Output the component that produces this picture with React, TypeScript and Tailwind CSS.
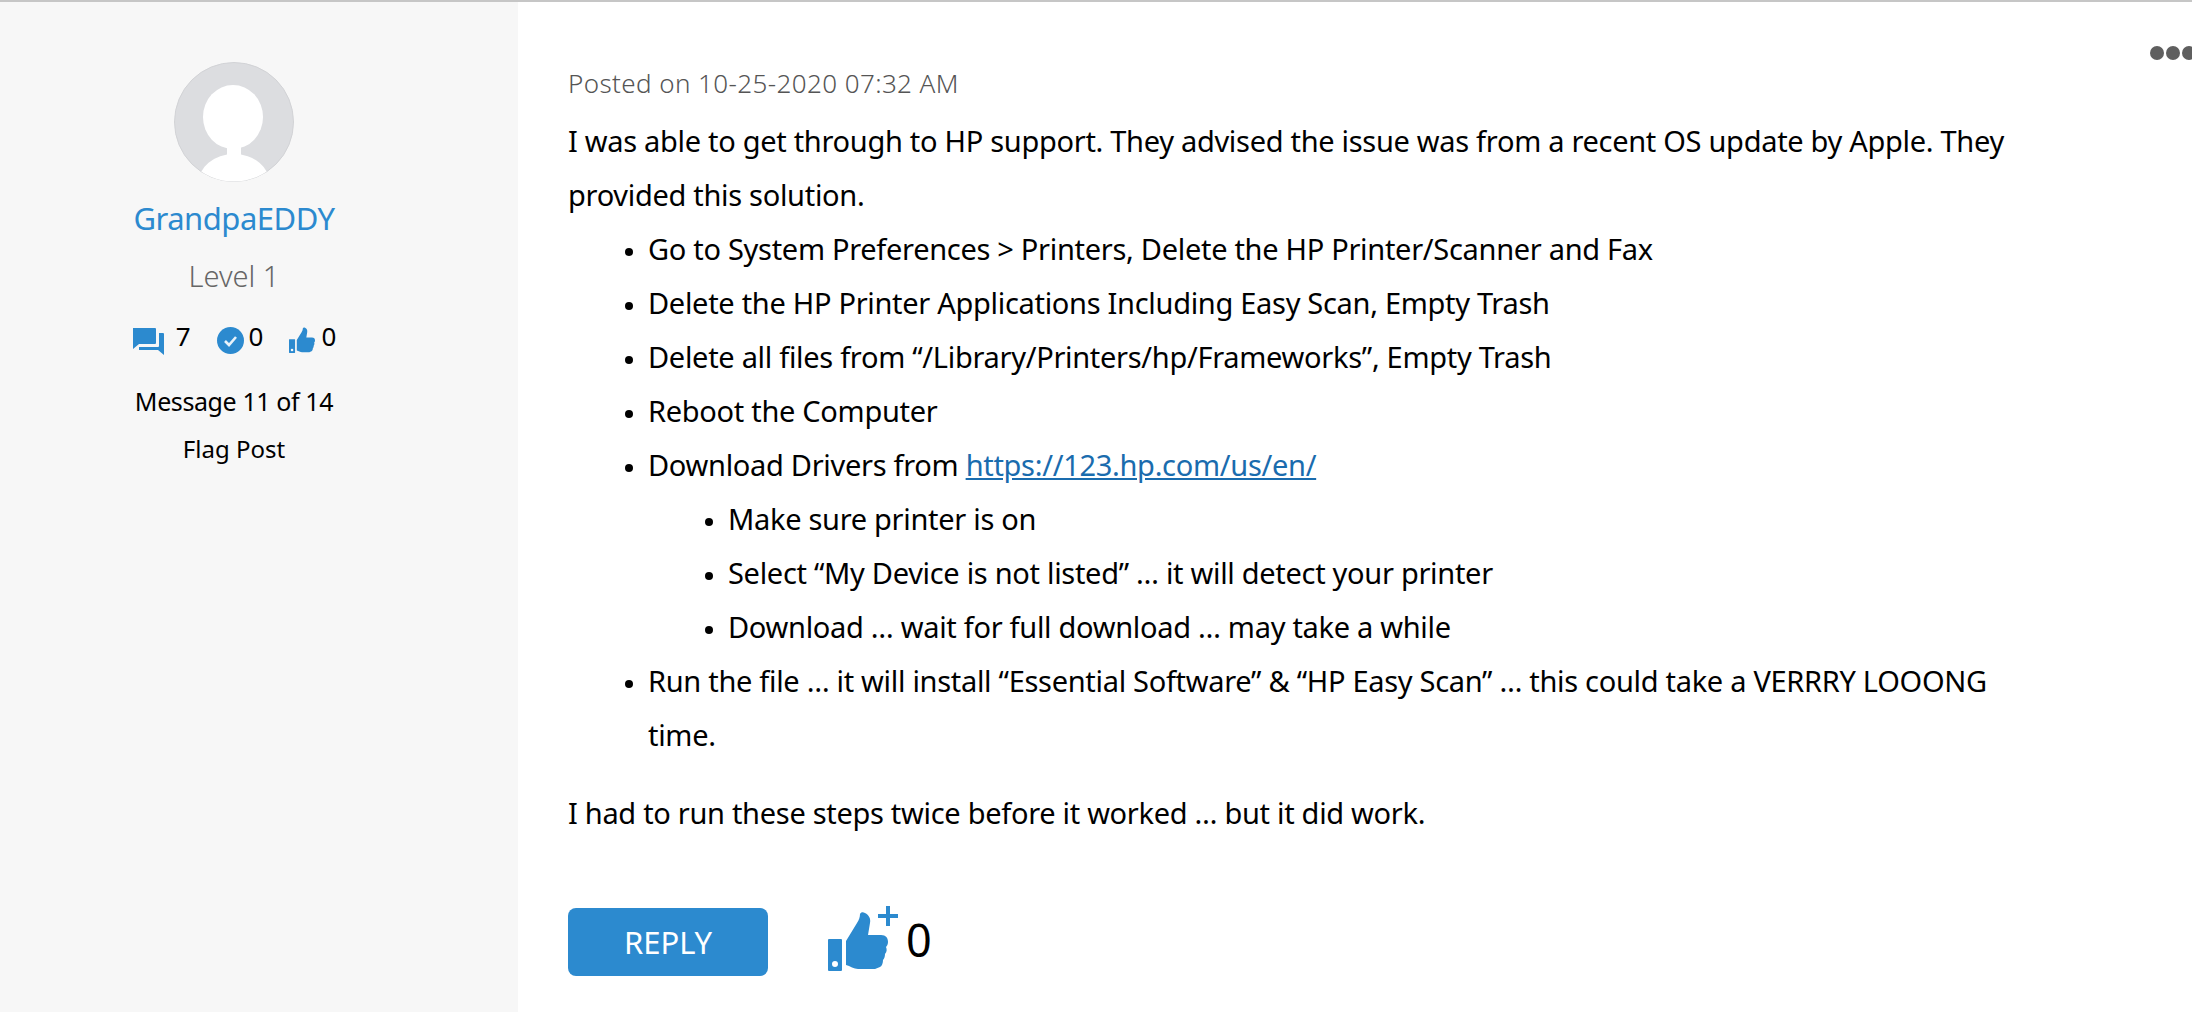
const blue = "#2c8acf";

function ThumbIcon({ className, plus }: { className: string; plus?: boolean }) {
  return (
    <svg viewBox={plus ? "0 0 72 68" : "0 6 60 60"} className={className} fill={blue}>
      <path
        fillRule="evenodd"
        d="M1 34h12a1 1 0 0 1 1 1v30a1 1 0 0 1-1 1H1a1 1 0 0 1-1-1V35a1 1 0 0 1 1-1zm6 22a3 3 0 1 0 0 6 3 3 0 0 0 0-6z"
      />
      <path d="M18 36 29 18c2-3 3-6 3-9 1-2 3-2 5-1 4 2 6 6 5 10l-2 12h13c5 0 7 3 7 7 0 2-1 4-2 5 1 2 1 5-1 7 0 3-1 5-2 6 0 3-1 6-3 7l-5 2H30c-4 0-8-3-12-4z" />
      {plus && <path d="M58 1h4v8h8v4h-8v8h-4v-8h-8V9h8z" />}
    </svg>
  );
}

function Stat({ icon, value, gap }: { icon: React.ReactNode; value: string; gap: string }) {
  return (
    <div className={`flex items-start ${gap}`}>
      {icon}
      <span className="text-[26px] leading-[27px] text-black">{value}</span>
    </div>
  );
}

export default function App() {
  return (
    <div className="relative flex h-[1012px] overflow-hidden border-t-2 border-[#c6c6c6] bg-white font-['Noto_Sans',sans-serif]">
      {/* author column */}
      <aside className="flex w-[518px] flex-col items-center bg-[#f7f7f7] pr-[50px] pt-[60px]">
        <svg viewBox="0 0 120 120" className="h-[120px] w-[120px]">
          <defs>
            <clipPath id="avatar">
              <circle cx="60" cy="60" r="59.5" />
            </clipPath>
          </defs>
          <circle cx="60" cy="60" r="59.5" fill="#dcdde0" stroke="#d2d3d6" />
          <g clipPath="url(#avatar)" fill="#fff">
            <ellipse cx="59" cy="55" rx="30" ry="32" />
            <rect x="53" y="78" width="14" height="22" />
            <ellipse cx="60" cy="122" rx="36" ry="30" />
          </g>
        </svg>
        <a className="mt-[13px] text-[31px] leading-[46px] tracking-[-0.5px] text-[#2c8acf]">GrandpaEDDY</a>
        <div className="mt-[14px] text-[29px] font-light leading-[42px] text-[#666666]">Level 1</div>
        <div className="mt-[26px] flex items-start gap-[26px]">
          <Stat
            gap="gap-[12px]"
            value="7"
            icon={
              <svg viewBox="0 0 32 28" className="mt-[4px] h-[28px] w-[32px]" fill={blue}>
                <path d="M1 1h22a1 1 0 0 1 1 1v14a1 1 0 0 1-1 1H7l-6 5z" />
                <path d="M27 6h4a1 1 0 0 1 1 1v21l-6-5H7v-3h19a1 1 0 0 0 1-1z" />
              </svg>
            }
          />
          <Stat
            gap="gap-[5px]"
            value="0"
            icon={
              <svg viewBox="0 0 27 27" className="mt-[4px] h-[27px] w-[27px]">
                <circle cx="13.5" cy="13.5" r="13.5" fill={blue} />
                <path d="M8 14l4 4 7-8" fill="none" stroke="#e8f2fa" strokeWidth="2.6" />
              </svg>
            }
          />
          <Stat gap="gap-[6px]" value="0" icon={<ThumbIcon className="mt-[4px] h-[26px] w-[26px]" />} />
        </div>
        <div className="mt-[28px] text-[25px] leading-[36px] tracking-[-0.4px] text-black">Message 11 of 14</div>
        <a className="mt-[12px] text-[24px] leading-[36px] text-black">Flag Post</a>
      </aside>

      {/* post body */}
      <main className="flex-1 pl-[50px] pr-[160px] pt-[63px] text-[29px] leading-[54px] tracking-[-0.3px] text-black">
        <div className="mb-[13px] text-[26px] font-light leading-[36px] tracking-[0.4px] text-[#555555]">Posted on 10-25-2020 07:32 AM</div>
        <p>
          I was able to get through to HP support. They advised the issue was from a recent OS update by Apple. They
          provided this solution.
        </p>
        <ul className="list-disc pl-[80px] marker:text-[23px]">
          <li>Go to System Preferences &gt; Printers, Delete the HP Printer/Scanner and Fax</li>
          <li>Delete the HP Printer Applications Including Easy Scan, Empty Trash</li>
          <li>Delete all files from “/Library/Printers/hp/Frameworks”, Empty Trash</li>
          <li>Reboot the Computer</li>
          <li>
            Download Drivers from <a className="text-[#1a6cae] underline">https://123.hp.com/us/en/</a>
            <ul className="list-disc pl-[80px] marker:text-[23px]">
              <li>Make sure printer is on</li>
              <li>Select “My Device is not listed” … it will detect your printer</li>
              <li>Download … wait for full download … may take a while</li>
            </ul>
          </li>
          <li>Run the file … it will install “Essential Software” &amp; “HP Easy Scan” … this could take a VERRRY LOOONG time.</li>
        </ul>
        <p className="mt-[24px]">I had to run these steps twice before it worked … but it did work.</p>
        <div className="mt-[68px] flex items-start">
          <button className="h-[68px] w-[200px] rounded-[8px] bg-[#2c8acf] text-[31px] tracking-normal text-white">REPLY</button>
          <ThumbIcon plus className="ml-[60px] -mt-[3px] h-[68px] w-[72px]" />
          <span className="ml-[6px] mt-[2px] text-[45px] leading-[60px] tracking-normal text-black">0</span>
        </div>
      </main>

      {/* overflow menu, cut off by the window edge */}
      <div className="absolute right-[-4px] top-[44px] flex gap-[2px]">
        <span className="h-[14px] w-[14px] rounded-full bg-[#5f5f5f]" />
        <span className="h-[14px] w-[14px] rounded-full bg-[#5f5f5f]" />
        <span className="h-[14px] w-[14px] rounded-full bg-[#5f5f5f]" />
      </div>
    </div>
  );
}
